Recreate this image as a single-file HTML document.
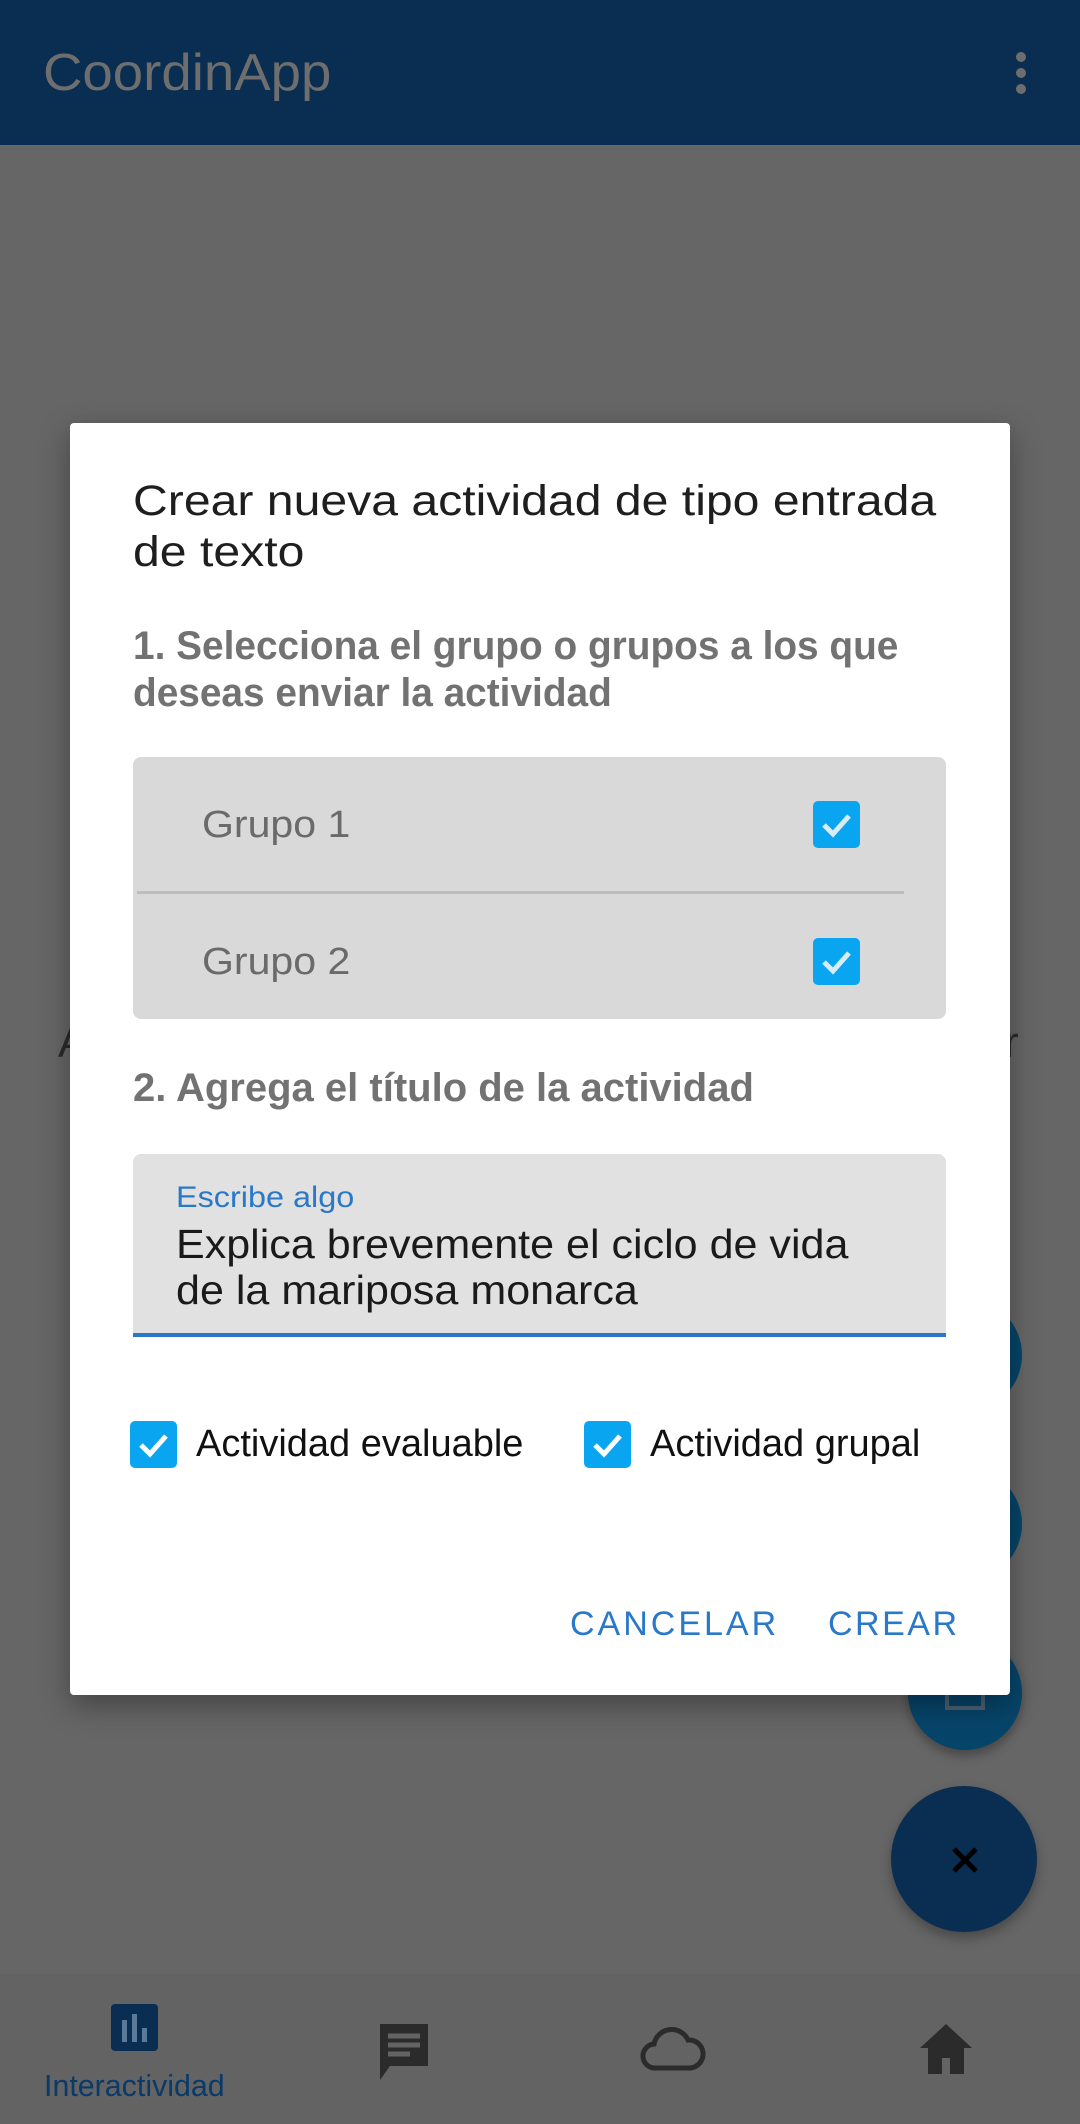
<!DOCTYPE html>
<html><head><meta charset="utf-8"><style>
*{margin:0;padding:0;box-sizing:border-box}
body{width:1080px;height:2124px;position:relative;overflow:hidden;background:#666;font-family:"Liberation Sans",sans-serif}
.a{position:absolute;white-space:nowrap}
.t{transform-origin:left center}
.cb{position:absolute;width:47px;height:47px;border-radius:5px;background:#0aa5f0}
.cb svg{position:absolute;left:0;top:0}
</style></head><body>
<div class="a" style="left:0;top:0;width:1080px;height:145px;background:#0a2d52"></div>
<div class="a t" style="left:43px;top:45px;font-size:52px;line-height:56px;color:#6e6e6e;transform:scaleX(1.05)">CoordinApp</div>
<div class="a" style="left:1016px;top:52px;width:10px;height:10px;border-radius:5px;background:#6e6e6e"></div>
<div class="a" style="left:1016px;top:68px;width:10px;height:10px;border-radius:5px;background:#6e6e6e"></div>
<div class="a" style="left:1016px;top:84px;width:10px;height:10px;border-radius:5px;background:#6e6e6e"></div>
<div class="a" style="left:58px;top:1018px;font-size:44px;color:#2a2a2a">A</div>
<div class="a" style="left:1004px;top:1018px;font-size:44px;color:#2a2a2a">r</div>
<!-- FABs -->
<div class="a" style="left:908px;top:1298px;width:114px;height:114px;border-radius:57px;background:#06456a"></div>
<div class="a" style="left:908px;top:1467px;width:114px;height:114px;border-radius:57px;background:#06456a"></div>
<div class="a" style="left:908px;top:1636px;width:114px;height:114px;border-radius:57px;background:#06456a;box-shadow:0 6px 10px rgba(0,0,0,.3)"></div>
<div class="a" style="left:945px;top:1680px;width:40px;height:30px;border:4px solid #4b6273;border-top:none"></div>
<div class="a" style="left:891px;top:1786px;width:146px;height:146px;border-radius:73px;background:#0a2d52;box-shadow:0 6px 12px rgba(0,0,0,.3)"></div>
<svg class="a" style="left:945px;top:1840px" width="40" height="40" viewBox="0 0 40 40"><path d="M9 9L31 31M31 9L9 31" stroke="#000" stroke-width="5"/></svg>
<!-- bottom nav -->
<div class="a" style="left:0;top:1974px;width:1080px;height:150px;background:#636363"></div>
<div class="a" style="left:111px;top:2004px;width:47px;height:47px;border-radius:4px;background:#0a2d52"></div>
<div class="a" style="left:122px;top:2020px;width:5px;height:22px;background:#5a7a9a"></div>
<div class="a" style="left:132px;top:2014px;width:5px;height:28px;background:#5a7a9a"></div>
<div class="a" style="left:142px;top:2028px;width:5px;height:14px;background:#5a7a9a"></div>
<div class="a t" style="left:44px;top:2068px;font-size:31px;line-height:36px;color:#0a3a6a;transform:scaleX(.98)">Interactividad</div>
<svg class="a" style="left:376px;top:2020px" width="56" height="64" viewBox="0 0 56 64"><path d="M4 4h48v42H14L4 60z" fill="#2b2b2b"/><path d="M12 16h32M12 25h32M12 34h22" stroke="#636363" stroke-width="5"/></svg>
<svg class="a" style="left:640px;top:2024px" width="66" height="50" viewBox="0 0 66 50"><path d="M16 44a12 12 0 0 1-2-24a18 18 0 0 1 34-4a14 14 0 0 1 2 28z" fill="none" stroke="#2b2b2b" stroke-width="5"/></svg>
<svg class="a" style="left:918px;top:2022px" width="56" height="54" viewBox="0 0 56 54"><path d="M28 2L2 26h8v26h14V36h8v16h14V26h8z" fill="#2b2b2b"/></svg>
<!-- dialog -->
<div class="a" style="left:70px;top:423px;width:940px;height:1272px;background:#fff;border-radius:4px;box-shadow:0 10px 30px rgba(0,0,0,.35)"></div>
<div class="a t" style="left:133px;top:476px;font-size:43px;line-height:50px;color:#1e1e1e;transform:scaleX(1.12)">Crear nueva actividad de tipo entrada</div>
<div class="a t" style="left:133px;top:527px;font-size:43px;line-height:50px;color:#1e1e1e;transform:scaleX(1.12)">de texto</div>
<div class="a t" style="left:133px;top:623px;font-size:40px;line-height:46px;color:#727272;font-weight:bold;transform:scaleX(.97)">1. Selecciona el grupo o grupos a los que</div>
<div class="a t" style="left:133px;top:670px;font-size:40px;line-height:46px;color:#727272;font-weight:bold;transform:scaleX(.97)">deseas enviar la actividad</div>
<div class="a" style="left:133px;top:757px;width:813px;height:262px;background:#d9d9d9;border-radius:8px"></div>
<div class="a" style="left:137px;top:891px;width:767px;height:3px;background:#bdbdbd"></div>
<div class="a t" style="left:202px;top:803px;font-size:38px;line-height:44px;color:#6a6a6a;transform:scaleX(1.08)">Grupo 1</div>
<div class="a t" style="left:202px;top:940px;font-size:38px;line-height:44px;color:#6a6a6a;transform:scaleX(1.08)">Grupo 2</div>
<div class="cb" style="left:813px;top:801px"><svg width="47" height="47"><path d="M11 24l9 9l16-18" fill="none" stroke="#d8ecf6" stroke-width="5"/></svg></div>
<div class="cb" style="left:813px;top:938px"><svg width="47" height="47"><path d="M11 24l9 9l16-18" fill="none" stroke="#d8ecf6" stroke-width="5"/></svg></div>
<div class="a t" style="left:133px;top:1065px;font-size:40px;line-height:46px;color:#727272;font-weight:bold;transform:scaleX(1.0)">2. Agrega el título de la actividad</div>
<div class="a" style="left:133px;top:1154px;width:813px;height:182px;background:#e1e1e1;border-radius:8px 8px 0 0"></div>
<div class="a" style="left:133px;top:1333px;width:813px;height:4px;background:#2a78c8"></div>
<div class="a t" style="left:176px;top:1181px;font-size:30px;line-height:34px;color:#2a78c8;transform:scaleX(1.08)">Escribe algo</div>
<div class="a t" style="left:176px;top:1220px;font-size:41px;line-height:48px;color:#1a1a1a;transform:scaleX(1.05)">Explica brevemente el ciclo de vida</div>
<div class="a t" style="left:176px;top:1266px;font-size:41px;line-height:48px;color:#1a1a1a;transform:scaleX(1.05)">de la mariposa monarca</div>
<div class="cb" style="left:130px;top:1421px"><svg width="47" height="47"><path d="M11 24l9 9l16-18" fill="none" stroke="#fff" stroke-width="5"/></svg></div>
<div class="a t" style="left:196px;top:1421px;font-size:38px;line-height:46px;color:#111;transform:scaleX(1.0)">Actividad evaluable</div>
<div class="cb" style="left:584px;top:1421px"><svg width="47" height="47"><path d="M11 24l9 9l16-18" fill="none" stroke="#fff" stroke-width="5"/></svg></div>
<div class="a t" style="left:650px;top:1421px;font-size:38px;line-height:46px;color:#111;transform:scaleX(1.0)">Actividad grupal</div>
<div class="a" style="left:570px;top:1604px;font-size:34px;line-height:40px;color:#2a78c8;letter-spacing:3px">CANCELAR</div>
<div class="a" style="left:828px;top:1604px;font-size:34px;line-height:40px;color:#2a78c8;letter-spacing:2.5px">CREAR</div>
</body></html>
